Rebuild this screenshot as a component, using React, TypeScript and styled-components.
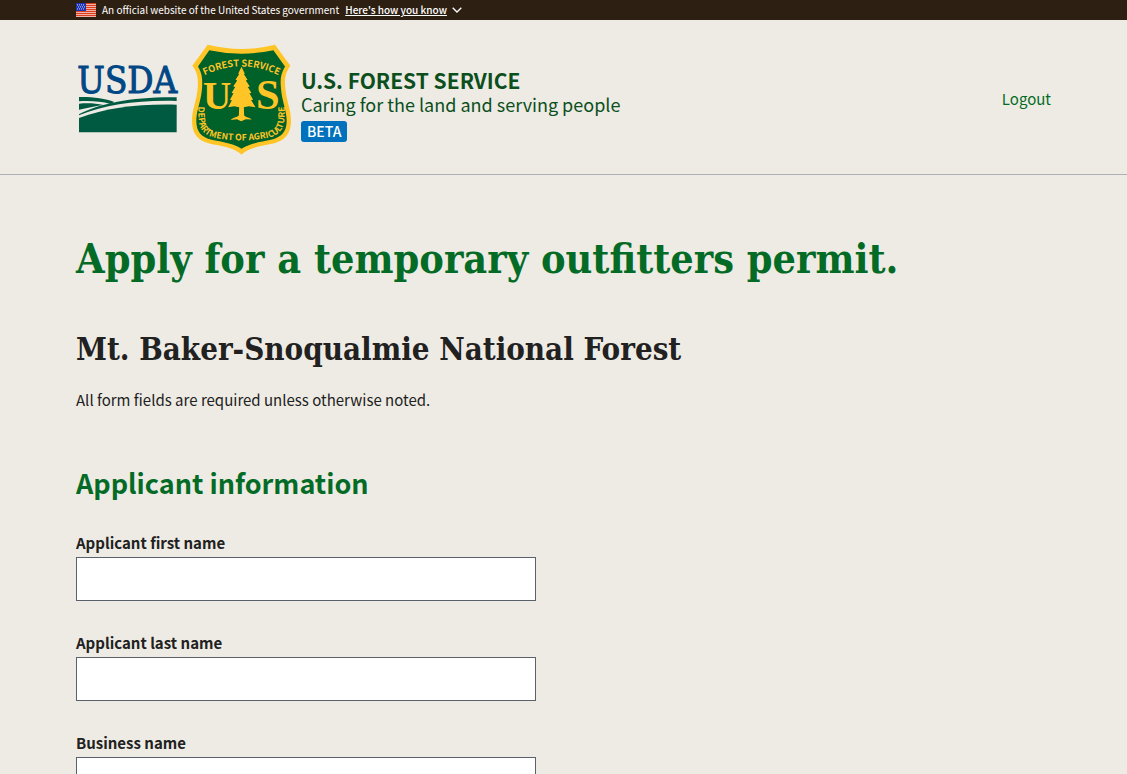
import React from "react";
import styled, { createGlobalStyle } from "styled-components";

const sans = `"Noto Sans CJK SC", "Noto Sans", sans-serif`;
const serif = `"DejaVu Serif Condensed", "DejaVu Serif", serif`;
const narrow = `"Liberation Sans Narrow", "Noto Sans CJK SC", sans-serif`;

const GlobalStyle = createGlobalStyle`
  *, *::before, *::after { box-sizing: border-box; }
  body {
    margin: 0;
    background: #eeebe4;
    color: #212121;
    font-family: ${sans};
    font-size: 15px;
    line-height: 24px;
  }
`;

const Container = styled.div`
  max-width: 1039px;
  margin: 0 auto;
  padding: 0 32px;
`;

const Banner = styled.section`
  background: #2e1f13;
  color: #fff;
  font-size: 10px;
  line-height: 20px;
`;

const BannerRow = styled(Container)`
  display: flex;
  align-items: center;
  gap: 6px;
`;

const BannerButton = styled.button`
  display: flex;
  align-items: center;
  gap: 5px;
  padding: 0;
  border: 0;
  background: none;
  color: inherit;
  font: inherit;
  font-weight: 500;
  cursor: pointer;
`;

const Underlined = styled.span`
  text-decoration: underline;
`;

const Header = styled.header`
  border-bottom: 1px solid #aeb0b5;
`;

const HeaderRow = styled(Container)`
  display: flex;
  align-items: center;
  justify-content: space-between;
  padding-top: 24px;
  padding-bottom: 19px;
`;

const Brand = styled.div`
  display: flex;
  align-items: center;
  gap: 10px;
`;

const Drawing = styled.svg`
  display: block;
  flex: none;
`;

const BrandText = styled.div`
  padding-top: 11px;
  color: #0b4f1c;
`;

const BrandName = styled.div`
  font-size: 21px;
  font-weight: 700;
`;

const Tagline = styled.div`
  font-size: 18px;
`;

const Beta = styled.div`
  width: fit-content;
  margin-top: 5px;
  padding: 0 6px;
  border-radius: 3px;
  background: #0071bc;
  color: #fff;
  font-size: 14px;
  font-weight: 500;
  line-height: 21px;
`;

const Nav = styled.nav`
  padding-bottom: 2px;
`;

const NavLink = styled.a`
  color: #046b26;
  text-decoration: none;
`;

const Main = styled(Container).attrs({ as: "main" })`
  padding-top: 56px;
  padding-bottom: 56px;
`;

const Title = styled.h1`
  margin: 0;
  color: #046b26;
  font-family: ${serif};
  font-size: 41px;
  line-height: 56px;
`;

const ForestName = styled.h2`
  margin: 40px 0 0;
  font-family: ${serif};
  font-size: 31px;
  line-height: 44px;
`;

const Note = styled.p`
  margin: 17px 0 0;
`;

const SectionTitle = styled.h3`
  margin: 51px 0 0;
  color: #046b26;
  font-size: 27px;
  line-height: 40px;
`;

const Fields = styled.form`
  display: flex;
  flex-direction: column;
  gap: 30px;
  max-width: 460px;
  margin-top: 28px;
`;

const Field = styled.div`
  display: flex;
  flex-direction: column;
  gap: 2px;
`;

const Label = styled.label`
  font-weight: 700;
`;

const TextInput = styled.input`
  width: 100%;
  height: 44px;
  padding: 10px;
  border: 1px solid #5b616b;
  border-radius: 0;
  background: #fff;
  font: inherit;
`;

const fields = [
  { id: "first-name", label: "Applicant first name" },
  { id: "last-name", label: "Applicant last name" },
  { id: "business-name", label: "Business name" },
];

function Flag() {
  return (
    <Drawing width="20" height="14" viewBox="0 0 20 14" aria-hidden="true">
      <rect width="20" height="14" fill="#fff" />
      {[0, 2, 4, 6, 8, 10, 12].map((y) => (
        <rect key={y} y={y} width="20" height="1.4" fill="#db3e1f" />
      ))}
      <rect width="10" height="8" fill="#1e33b1" />
      {[1, 3, 5].map((y) =>
        [1, 3, 5, 7].map((x) => (
          <rect key={`${x}-${y}`} x={x + (y === 3 ? 1 : 0)} y={y + 0.4} width="1" height="1" fill="#c9d0f2" />
        ))
      )}
    </Drawing>
  );
}

function UsdaLogo() {
  return (
    <Drawing width="106" height="72" viewBox="18 28 318 216" role="img" aria-label="USDA">
      <text x="22" y="114" fontFamily={serif} fontSize="109" fill="#004785" stroke="#004785" strokeWidth="3">
        USDA
      </text>
      <g fill="#005941">
        <path d="M27 127 C66 126 104 131 133 142 L121 148 C94 140 60 138 27 140Z" />
        <path d="M27 147 C54 145 78 146 100 151 C74 155 50 160 27 165Z" />
        <path d="M320 128 V139 C200 136 110 150 27 182 V179 C92 145 190 126 320 128Z" />
        <path d="M320 150 V233 H27 V190 C110 159 210 147 320 150Z" />
      </g>
    </Drawing>
  );
}

function ForestServiceShield() {
  return (
    <Drawing width="99" height="111" viewBox="19 19 298 333" role="img" aria-label="Forest Service shield">
      <path
        fill="#ffc526"
        d="M66 21 Q168 46 269 21 L315 84 C300 105 297 122 300 152 C303 190 317 215 317 250 C317 290 296 309 264 318 C226 326 194 329 168 351 C142 329 108 326 71 318 C39 309 19 290 19 250 C19 215 33 190 36 152 C38 122 36 105 20 84Z"
      />
      <path
        fill="#006129"
        d="M71 37 Q168 58 264 37 L299 86 C286 108 284 124 287 154 C290 192 304 218 304 250 C304 283 287 298 260 306 C222 314 190 318 168 334 C146 318 112 314 75 306 C48 298 32 283 32 250 C32 218 46 192 49 154 C51 124 50 108 37 86Z"
      />
      <defs>
        <path id="arc-top" d="M46 118 Q168 54 290 118" />
        <path id="arc-bottom" d="M38 212 C36 264 46 290 84 300 Q168 317 252 300 C290 290 300 264 298 212" />
      </defs>
      <g fill="#ffc526" fontFamily={narrow} fontWeight="700" textAnchor="middle">
        <text fontSize="28">
          <textPath href="#arc-top" startOffset="50%">FOREST SERVICE</textPath>
        </text>
        <text fontSize="26">
          <textPath href="#arc-bottom" startOffset="50%">DEPARTMENT OF AGRICULTURE</textPath>
        </text>
      </g>
      <g fill="#ffc526" fontFamily={`"Liberation Serif", serif`} fontWeight="700" textAnchor="middle">
        <text x="95" y="213" fontSize="118">U</text>
        <text x="247" y="213" fontSize="128">S</text>
      </g>
      <path
        fill="#ffc526"
        stroke="#006129"
        strokeWidth="4"
        paintOrder="stroke"
        d="M168 87 L178 108 L175 109 L186 126 L181 128 L193 146 L187 148 L198 166 L192 167 L203 186 L197 187 L210 209 L190 206 L175 209 L176 234 C182 240 192 240 199 246 L181 245 L167 251 L154 245 L135 247 C142 240 153 240 160 234 L161 209 L146 206 L128 209 L139 188 L133 187 L144 167 L138 166 L149 148 L143 146 L155 128 L150 126 L161 109 L158 108Z"
      />
    </Drawing>
  );
}

export default function App() {
  return (
    <>
      <GlobalStyle />
      <Banner>
        <BannerRow>
          <Flag />
          <span>An official website of the United States government</span>
          <BannerButton type="button">
            <Underlined>Here's how you know</Underlined>
            <Drawing width="10" height="6" viewBox="0 0 10 6" aria-hidden="true">
              <path d="M0.7 0.7 L5 5 L9.3 0.7" fill="none" stroke="#fff" strokeWidth="1.3" />
            </Drawing>
          </BannerButton>
        </BannerRow>
      </Banner>
      <Header>
        <HeaderRow>
          <Brand>
            <UsdaLogo />
            <ForestServiceShield />
            <BrandText>
              <BrandName>U.S. FOREST SERVICE</BrandName>
              <Tagline>Caring for the land and serving people</Tagline>
              <Beta>BETA</Beta>
            </BrandText>
          </Brand>
          <Nav>
            <NavLink href="#logout">Logout</NavLink>
          </Nav>
        </HeaderRow>
      </Header>
      <Main>
        <Title>Apply for a temporary outfitters permit.</Title>
        <ForestName>Mt. Baker-Snoqualmie National Forest</ForestName>
        <Note>All form fields are required unless otherwise noted.</Note>
        <SectionTitle>Applicant information</SectionTitle>
        <Fields>
          {fields.map((f) => (
            <Field key={f.id}>
              <Label htmlFor={f.id}>{f.label}</Label>
              <TextInput id={f.id} name={f.id} type="text" />
            </Field>
          ))}
        </Fields>
      </Main>
    </>
  );
}
